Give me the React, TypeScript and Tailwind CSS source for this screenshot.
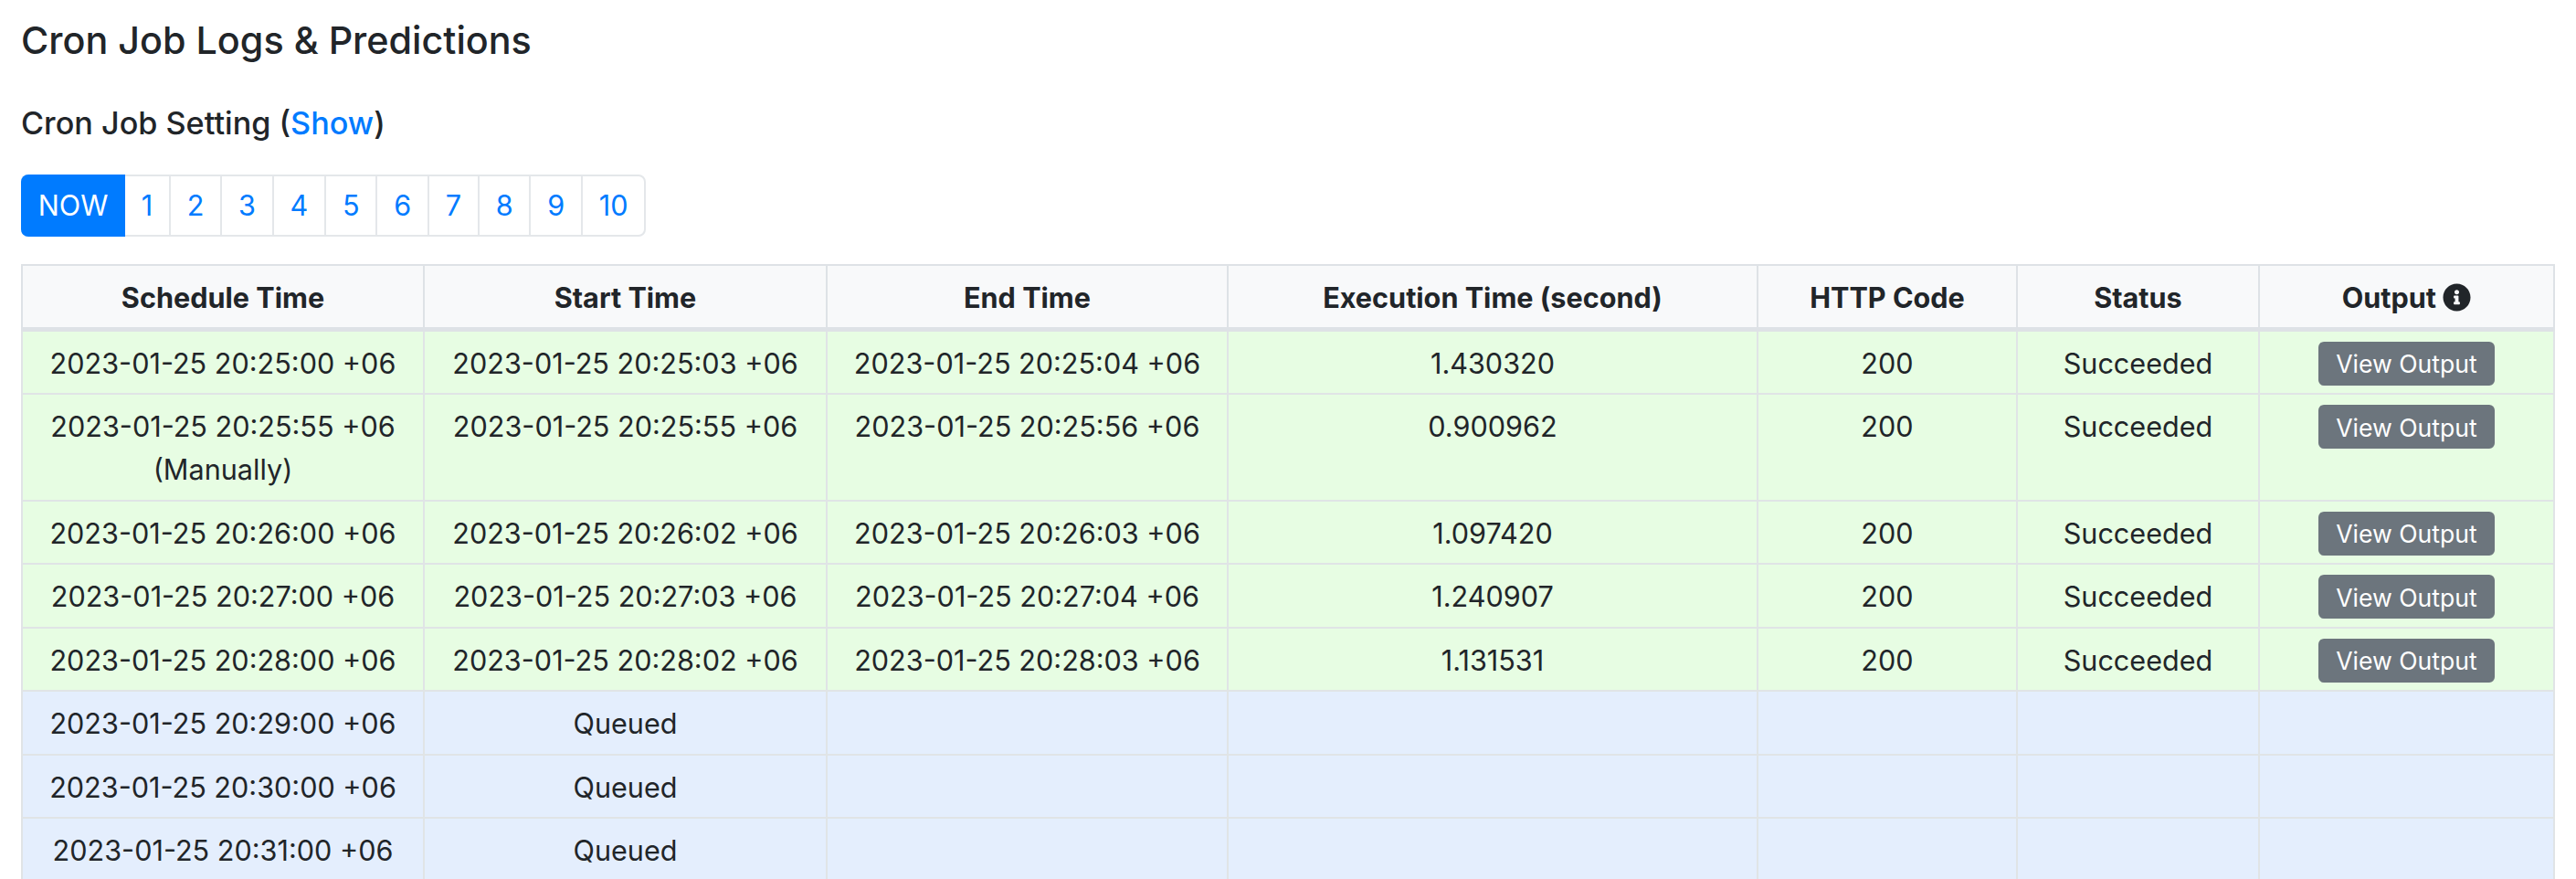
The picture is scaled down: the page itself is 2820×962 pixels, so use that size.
import { FaInfoCircle } from 'react-icons/fa';

const pages = ['1', '2', '3', '4', '5', '6', '7', '8', '9', '10'];

const done = [
  { schedule: '20:25:00', start: '20:25:03', end: '20:25:04', exec: '1.430320' },
  { schedule: '20:25:55', manual: true, start: '20:25:55', end: '20:25:56', exec: '0.900962' },
  { schedule: '20:26:00', start: '20:26:02', end: '20:26:03', exec: '1.097420' },
  { schedule: '20:27:00', start: '20:27:03', end: '20:27:04', exec: '1.240907' },
  { schedule: '20:28:00', start: '20:28:02', end: '20:28:03', exec: '1.131531' },
];
const queued = ['20:29:00', '20:30:00', '20:31:00'];

const stamp = (t: string) => `2023-01-25 ${t} +06`;

const th = 'border-2 border-b-[5px] border-[#dee2e6] bg-[#f8f9fa] h-[70px] p-0 pt-[3px] text-center align-middle font-bold';
const td = 'border-2 border-[#e0e4e6] px-2 pt-[14px] pb-[12.5px] text-center align-top leading-[41px]';

export default function App() {
  return (
    <div className="h-screen overflow-hidden bg-white pl-[23px] pr-[23px] pt-[17px] text-[30.6px] text-[#212529] font-['Inter',sans-serif]">
      <h4 className="text-[41.3px] leading-[54px] font-medium">Cron Job Logs &amp; Predictions</h4>
      <div className="mt-[39px] text-[34.2px] leading-[50px] font-medium">
        Cron Job Setting (<a className="text-[#007bff]">Show</a>)
      </div>
      <div className="mt-[31px] flex h-[68px] w-fit rounded-lg border-2 border-[#e4e7ea]">
        <span className="-my-[2px] -ml-[2px] flex w-[114px] items-center justify-center rounded-l-lg bg-[#007bff] text-white">NOW</span>
        {pages.map(p => (
          <a key={p} className="flex items-center border-r-2 border-[#e4e7ea] px-[17.8px] text-[#007bff] last:border-r-0">{p}</a>
        ))}
      </div>
      <table className="mt-[30px] w-full table-fixed border-collapse">
        <colgroup>
          <col className="w-[440px]" />
          <col className="w-[441px]" />
          <col className="w-[439px]" />
          <col className="w-[580px]" />
          <col className="w-[284px]" />
          <col className="w-[265px]" />
          <col />
        </colgroup>
        <thead>
          <tr>
            <th className={th}>Schedule Time</th>
            <th className={th}>Start Time</th>
            <th className={th}>End Time</th>
            <th className={th}>Execution Time (second)</th>
            <th className={th}>HTTP Code</th>
            <th className={th}>Status</th>
            <th className={th}>
              Output <FaInfoCircle className="inline-block size-[31px] align-[-4px]" />
            </th>
          </tr>
        </thead>
        <tbody>
          {done.map(r => (
            <tr key={r.schedule} className="bg-[#e7fde3]">
              <td className={td}>
                {stamp(r.schedule)}
                {r.manual && <div className="mt-[6px]">(Manually)</div>}
              </td>
              <td className={td}>{stamp(r.start)}</td>
              <td className={td}>{stamp(r.end)}</td>
              <td className={td}>{r.exec}</td>
              <td className={td}>200</td>
              <td className={td}>Succeeded</td>
              <td className={`${td} !pt-[11px] !pb-[8px]`}>
                <button className="h-[48px] w-[193px] rounded-[6px] bg-[#6c757d] pt-[2px] text-[26.6px] leading-none text-white">View Output</button>
              </td>
            </tr>
          ))}
          {queued.map(t => (
            <tr key={t} className="bg-[#e4eefd]">
              <td className={td}>{stamp(t)}</td>
              <td className={td}>Queued</td>
              <td className={td}></td>
              <td className={td}></td>
              <td className={td}></td>
              <td className={td}></td>
              <td className={td}></td>
            </tr>
          ))}
        </tbody>
      </table>
    </div>
  );
}
